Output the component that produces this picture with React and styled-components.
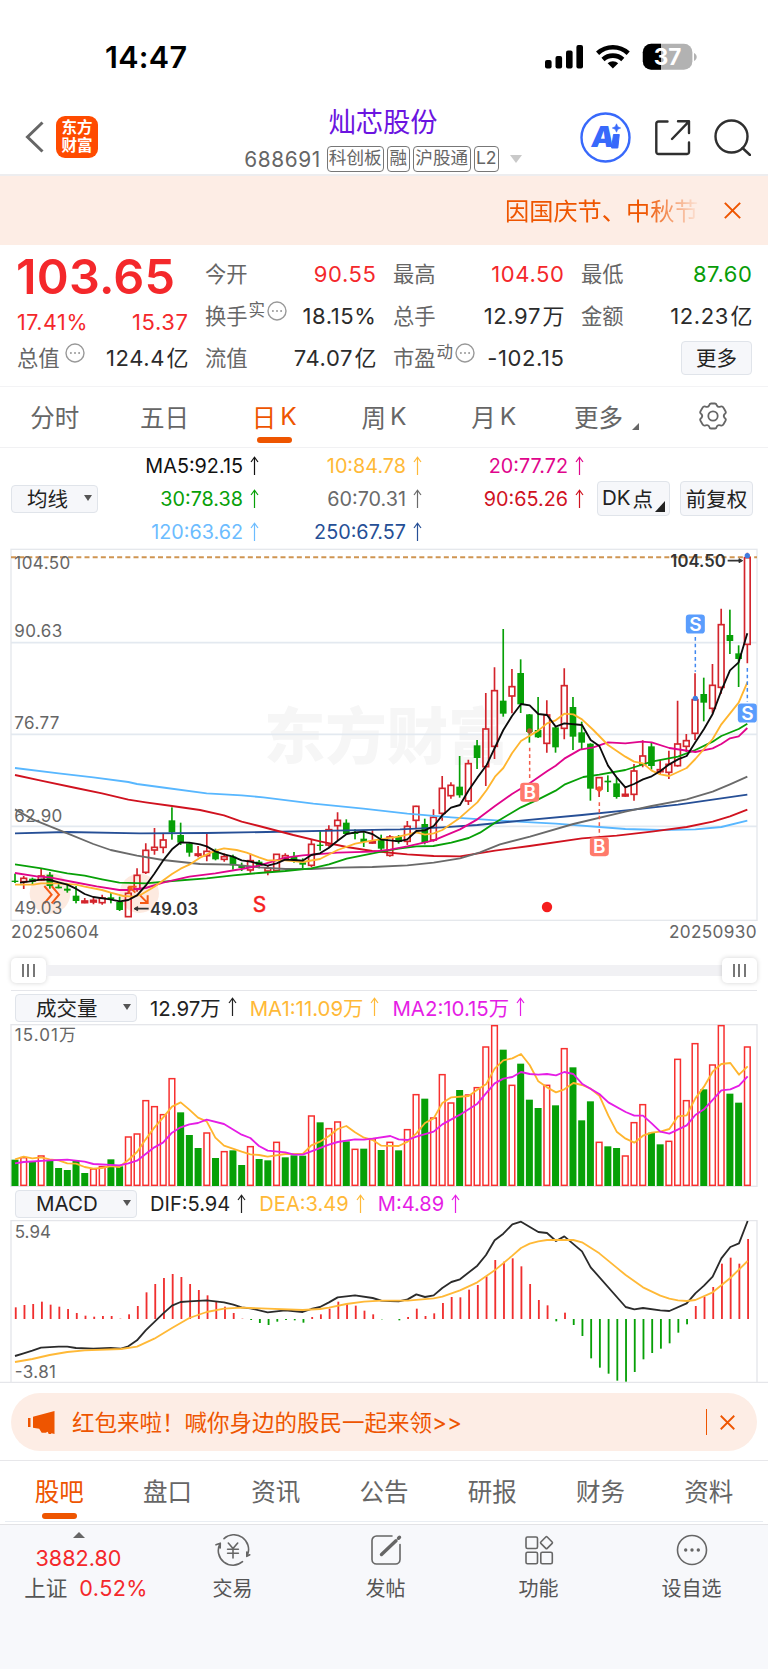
import React from "react";
import styled, { createGlobalStyle } from "styled-components";

const RED = "#f4282b";
const GREEN = "#089c08";
const ORANGE = "#ee5500";
const STEP = 26.155;

const xAt = (i) => 45 + STEP * i;

// color, high, body top, body bottom, low
const candles = `g 1001 1022 1026 1029|r 1008 1015 1025 1047|g 1013 1016 1026 1032|r 985 1008 1020 1023|g 996 1004 1038 1046|g 1033 1040 1045 1045|g 1035 1046 1052 1058|g 1038 1067 1083 1090|r 1074 1083 1088 1090|r 1070 1081 1086 1093|r 1064 1074 1088 1094|g 1058 1072 1077 1090|g 1070 1086 1110 1113|r 1040 1060 1130 1130|r 985 1006 1048 1055|r 910 931 997 1002|r 864 922 930 944|r 882 900 922 940|g 802 841 877 899|g 848 885 908 915|g 907 910 938 950|r 918 942 946 952|r 882 934 947 964|g 926 934 958 961|r 940 950 958 965|g 944 950 976 989|g 968 978 984 993|r 941 962 990 998|g 960 965 978 985|r 978 985 993 1006|r 943 943 992 992|r 940 947 956 962|g 936 950 962 968|g 955 967 974 984|r 898 913 976 982|g 870 914 918 932|r 856 869 915 920|r 817 841 857 900|g 838 848 882 885|g 868 878 882 898|g 877 896 906 921|r 868 905 909 911|g 884 895 926 932|r 885 891 946 950|g 885 890 906 911|r 843 859 904 915|r 797 799 841 868|g 836 852 908 913|r 808 832 900 905|r 708 745 820 842|r 727 736 767 776|g 648 740 766 773|r 659 671 783 795|g 600 616 654 687|r 459 567 680 738|r 382 452 619 657|g 267 482 521 530|r 387 440 468 520|g 358 399 493 519|g 522 523 576 608|g 471 570 592 594|r 481 525 610 638|g 560 562 622 638|r 385 437 565 598|g 471 501 590 630|g 545 577 608 628|g 610 611 746 782|r 712 713 747 771|g 706 722 727 756|g 712 730 771 776|r 740 763 768 770|r 672 693 763 782|r 601 648 673 682|g 609 619 678 689|r 660 689 695 703|r 632 673 697 717|r 482 612 677 680|r 582 602 619 636|r 400 479 580 600|g 413 462 488 544|r 372 436 505 520|r 206 254 442 461|g 209 285 303 342|g 316 340 357 441|r 38 53 313 370`
  .split("|")
  .map((row) => {
    const [color, ...rest] = row.split(" ");
    return [color, ...rest.map(Number)];
  });

const maLines = [
  {
    color: "#58b7ff",
    points:
      "45,684 176,700 280,712 385,726 411,732 500,744 620,760 725,766 790,772 940,791 1090,806 1222,821 1354,832 1500,842 1667,851 1876,867 1980,870 2086,868 2164,861 2242,842",
  },
  {
    color: "#264f96",
    points:
      "45,880 200,876 420,880 620,879 800,876 1040,871 1200,868 1327,862 1432,855 1563,842 1746,825 1900,809 2034,794 2138,779 2242,764",
  },
  {
    color: "#d0121f",
    points:
      "45,705 123,722 228,744 306,760 385,779 437,787 516,798 600,810 672,826 725,845 777,858 880,885 960,904 1040,921 1117,933 1222,943 1301,948 1380,949 1485,932 1589,918 1746,895 1850,887 1955,875 2060,861 2138,845 2190,829 2242,809",
  },
  {
    color: "#6a6a6a",
    points:
      "45,808 100,839 202,880 280,912 332,930 411,947 489,960 600,972 700,974 777,982 856,987 934,987 1013,983 1117,981 1222,976 1301,968 1380,955 1440,937 1500,913 1590,890 1720,852 1876,815 1955,798 2060,778 2138,755 2190,733 2242,710",
  },
  {
    color: "#07a007",
    points:
      "45,973 124,985 202,1000 254,1007 306,1018 358,1028 437,1030 516,1023 620,1015 700,1006 777,999 856,993 934,985 987,973 1040,956 1144,935 1196,926 1249,919 1300,918 1354,908 1406,894 1440,878 1485,848 1510,833 1563,802 1615,778 1667,752 1693,734 1750,711 1798,704 1876,690 1955,665 2034,650 2086,630 2138,605 2164,588 2216,567 2242,551",
  },
  {
    color: "#e0058c",
    points:
      "45,999 110,1009 149,1012 220,1026 290,1039 358,1050 385,1050 437,1044 489,1028 568,1010 646,1000 725,987 777,977 856,953 908,946 1013,938 1117,935 1170,929 1222,919 1301,901 1380,868 1432,838 1485,798 1536,762 1589,730 1641,694 1667,677 1693,656 1740,629 1780,622 1824,607 1876,610 1925,605 1955,607 2008,624 2086,636 2138,625 2164,612 2190,595 2216,589 2242,564",
  },
  {
    color: "#ffb52e",
    points:
      "45,1034 100,1034 123,1030 176,1030 228,1034 254,1040 306,1050 332,1058 370,1068 400,1070 425,1063 463,1040 516,1002 542,986 568,974 600,953 646,932 672,925 710,930 740,938 777,952 803,961 856,961 908,966 960,957 1013,930 1066,911 1120,901 1196,890 1249,877 1275,884 1301,880 1327,870 1380,833 1432,787 1460,750 1485,710 1510,684 1536,640 1563,603 1589,587 1615,572 1641,550 1667,541 1693,521 1720,523 1746,538 1780,570 1824,615 1876,650 1902,665 1929,670 1955,692 1981,703 2008,708 2060,684 2086,657 2112,627 2138,597 2164,553 2216,488 2242,427",
  },
  {
    color: "#0c0c0c",
    points:
      "60,1028 90,1024 125,1018 150,1020 176,1027 202,1034 228,1046 254,1062 280,1071 330,1078 360,1084 385,1080 411,1066 437,1037 463,1001 489,962 516,928 542,907 568,908 600,913 620,919 646,934 672,943 699,950 725,961 751,965 777,971 803,977 830,970 855,959 882,960 908,962 934,945 960,940 987,923 1013,902 1040,882 1066,877 1092,875 1117,882 1144,899 1170,901 1196,904 1222,898 1249,873 1275,871 1301,858 1327,826 1353,803 1380,795 1406,751 1432,713 1460,675 1485,622 1510,570 1536,528 1563,492 1589,496 1615,522 1641,525 1667,560 1693,550 1746,555 1772,600 1798,618 1824,677 1850,712 1876,742 1902,732 1929,718 1955,709 1981,693 2008,673 2034,658 2060,648 2086,607 2112,567 2138,522 2164,452 2190,391 2216,367 2242,280",
  },
];

const volumes =
  "g690 r682 g696 r677 g692 g715 g721 g693 g730 r716 r709 g689 g710 r620 r611 r511 r529 r553 r445 g548 g616 g655 r608 g685 r664 g662 g706 r649 g688 g692 r636 g683 g677 g678 r557 g578 r595 r575 g635 r657 g657 r625 g661 r636 g662 r598 r493 g507 r563 r433 r518 g481 r494 r472 r350 r286 g360 r465 g402 g510 g535 r465 g527 r355 g413 g572 g515 r636 g650 g655 r677 r577 r523 g609 g644 r633 r387 r511 r340 g479 r404 r286 g492 g519 r350"
    .split(" ")
    .map((v) => [v[0], Number(v.slice(1))]);

const volumeMa1 =
  "45,688 71,680 97,685 123,682 149,688 176,691 202,700 228,701 254,711 280,716 306,714 332,708 358,711 385,690 411,666 437,628 463,593 489,563 516,530 542,517 568,539 594,563 620,574 646,623 672,647 725,665 751,673 777,675 803,680 856,672 908,672 934,646 960,635 987,618 1013,597 1039,588 1065,607 1092,623 1118,630 1144,647 1196,648 1223,635 1249,610 1275,579 1301,565 1327,519 1354,502 1406,498 1432,479 1458,463 1484,416 1510,391 1537,385 1563,372 1589,405 1615,454 1641,472 1668,487 1693,478 1720,459 1746,465 1772,476 1798,497 1825,557 1850,605 1877,626 1903,638 1929,617 1955,608 1981,605 2008,597 2034,559 2060,556 2086,505 2112,470 2138,425 2164,402 2191,399 2217,434 2243,409";
const volumeMa2 =
  "45,700 71,696 149,691 202,689 254,695 280,702 358,706 385,700 411,692 463,652 489,638 516,608 542,592 568,583 594,579 620,569 672,582 725,614 751,624 777,648 803,662 856,667 882,674 908,674 934,664 987,644 1013,636 1065,628 1092,629 1118,626 1171,618 1196,628 1223,630 1249,620 1301,605 1327,583 1380,554 1432,521 1458,490 1484,460 1510,446 1537,441 1563,426 1589,432 1615,434 1641,432 1668,436 1693,426 1720,432 1746,461 1798,492 1825,517 1877,546 1903,557 1929,557 1955,580 1981,605 2008,611 2060,586 2086,555 2112,538 2164,481 2191,478 2217,467 2243,439";

const macdBars = [
  352, 345, 342, 335, 344, 350, 357, 369, 377, 380, 378, 378, 386, 373, 348,
  307, 282, 264, 252, 261, 282, 300, 316, 336, 350, 369, 386, 390, 399, 405,
  395, 390, 391, 398, 381, 373, 356, 335, 341, 347, 362, 373, 388, 387, 391,
  381, 356, 378, 370, 339, 321, 322, 299, 285, 259, 210, 215, 205, 229, 282,
  330, 346, 394, 368, 405, 438, 505, 533, 551, 572, 575, 546, 508, 489, 476,
  460, 428, 403, 348, 320, 291, 221, 203, 221, 147,
];
const dif =
  "45,498 71,490 97,482 123,473 176,470 202,470 228,474 280,476 332,474 363,476 385,469 411,451 437,421 489,371 516,347 542,336 568,334 620,331 672,337 700,344 725,352 751,355 803,367 856,361 908,366 934,357 960,351 987,337 1013,322 1065,316 1118,324 1144,332 1170,333 1196,334 1223,328 1249,313 1275,321 1301,316 1327,294 1354,276 1380,268 1432,227 1458,195 1484,151 1510,131 1537,103 1563,95 1615,126 1641,129 1668,153 1693,139 1746,184 1772,232 1877,351 1903,358 1929,354 1981,361 2008,363 2060,340 2086,310 2112,287 2138,260 2164,205 2191,171 2217,160 2243,93";
const dea =
  "45,516 97,507 149,495 202,486 254,481 363,477 411,470 463,446 516,414 568,384 620,366 672,356 725,353 803,356 908,360 960,357 987,353 1039,342 1092,335 1144,332 1223,332 1301,325 1327,320 1380,301 1432,277 1484,241 1537,197 1563,174 1589,161 1615,154 1641,150 1720,150 1746,157 1798,190 1850,233 1877,255 1929,292 1981,317 2008,326 2034,331 2060,333 2086,330 2138,307 2191,264 2243,213";

const legend = [
  ["MA5:92.15", "#111"],
  ["10:84.78", "#ffb937"],
  ["20:77.72", "#e0058c"],
  ["30:78.38", "#07a007"],
  ["60:70.31", "#6a6a6a"],
  ["90:65.26", "#d0121f"],
  ["120:63.62", "#6cbcff"],
  ["250:67.57", "#264f96"],
];

const More = () => (
  <MoreSvg viewBox="0 0 20 20">
    <circle cx="10" cy="10" r="9" />
    <path d="M5.9 10h.01M10 10h.01M14.1 10h.01" />
  </MoreSvg>
);

const Arrow = () => (
  <ArrowSvg viewBox="0 0 9 20">
    <path d="M4.500 19V1.500M1 6 4.500 1.200 8 6" />
  </ArrowSvg>
);

const Amount = ({ unit, children }) => (
  <Value>
    {children}
    <Unit>{unit}</Unit>
  </Value>
);

const StatusIcons = () => (
  <svg width="154" height="30" viewBox="0 0 154 30">
    <g>
      <rect x="0" y="18" width="6.6" height="8.6" rx="2" />
      <rect x="10.5" y="14" width="6.6" height="12.6" rx="2" />
      <rect x="21" y="8.5" width="6.6" height="18.1" rx="2" />
      <rect x="31.4" y="3" width="6.6" height="23.6" rx="2" />
    </g>
    <g fill="none" stroke="#000" strokeWidth="4.6">
      <path d="M52.6 11.3a22.5 22.5 0 0 1 30.6 0" />
      <path d="M58 17.5a14.6 14.6 0 0 1 19.8 0" />
    </g>
    <path d="M67.9 26.6 62.6 21.3a7.8 7.8 0 0 1 10.6 0Z" />
    <clipPath id="batt">
      <rect x="97.8" y="1.8" width="49.6" height="26" rx="8.5" />
    </clipPath>
    <g clipPath="url(#batt)">
      <rect x="97" y="1" width="52" height="28" fill="#b2b2b2" />
      <rect x="97" y="1" width="19" height="28" />
    </g>
    <path d="M149 11v8c3.6-1.5 3.6-6.500 0-8Z" fill="#b2b2b2" />
    <text x="122.600" y="23.300" textAnchor="middle" fill="#fff" fontSize="22.500" fontWeight="700">
      37
    </text>
  </svg>
);

const KLine = () => (
  <Plot viewBox="0 24 2304 1128" height="376">
    <Watermark x="792" y="656">东方财富</Watermark>
    <g stroke="#e3e9f0" strokeWidth="5" fill="none">
      <path d="M33 308H2271M33 583H2271M33 859H2271" />
      <rect x="33" y="28" width="2238" height="1113" stroke="#e5e8ec" strokeWidth="4" />
    </g>
    <path d="M33 52H2271" stroke="#cf9552" strokeWidth="6" strokeDasharray="15 9.500" />
    <g fill="#fde3d6" opacity="0.75">
      <circle cx="150" cy="1060" r="61" />
      <circle cx="418" cy="1060" r="59" />
    </g>
    {candles.map(([color, high, top, bottom, low], i) => {
      const x = xAt(i);
      if (color === "g") {
        return (
          <g key={i} fill="#07a007">
            <rect x={x - 2.5} y={high} width="5" height={low - high} />
            <rect x={x - 10} y={top} width="20" height={Math.max(bottom - top, 4)} />
          </g>
        );
      }
      return (
        <g key={i} fill="none" stroke="#d3242c" strokeWidth="5">
          <path d={`M${x} ${high}V${top}M${x} ${bottom}V${low}`} />
          <rect x={x - 8.5} y={top} width="17" height={bottom - top} />
        </g>
      );
    })}
    {maLines.map(({ color, points }) => (
      <Line key={color} points={points} stroke={color} />
    ))}
    <g fill="none" stroke="#f55a14" strokeWidth="6">
      <path d="M133 1038l22 26-22 26M155 1038l22 26-22 26" />
      <path d="M388 1062v-22h22M390 1042l16 16M443 1066v23h-23M441 1087l-20-20" />
    </g>
    <AxisText x="43" y="87" textLength="168">104.50</AxisText>
    <AxisText x="43" y="291" textLength="144">90.63</AxisText>
    <AxisText x="43" y="567" textLength="135">76.77</AxisText>
    <AxisText x="43" y="845" textLength="144">62.90</AxisText>
    <AxisText x="43" y="1121" textLength="144">49.03</AxisText>
    <MarkText x="450" y="1126" textLength="144">49.03</MarkText>
    <MarkText x="2011" y="80" textLength="166">104.50</MarkText>
    <g stroke="#333" strokeWidth="5" fill="#333">
      <path d="M408 1106H446M2183 62H2222" />
      <path d="M402 1106l11-6v12ZM2228 62l-11-6v12Z" strokeWidth="3" />
    </g>
    <text x="758" y="1116" fontSize="63" fill="#f51d1d" stroke="#f51d1d" strokeWidth="1.500">S</text>
    <circle cx="1641" cy="1101" r="15.500" fill="#f51d1d" />
    <g fill="none" strokeWidth="4.500" strokeDasharray="11 9">
      <path d="M1589 623V722M1798 787V888" stroke="#f45b49" />
      <path d="M2086 291V395M2242 384V485" stroke="#4088f0" />
    </g>
    <circle cx="1589" cy="573" r="8" fill="#b8522f" />
    <circle cx="1798" cy="747" r="8" fill="#f9512f" />
    <circle cx="2086" cy="475" r="8" fill="#3f7ce0" />
    <circle cx="2242" cy="47" r="8" fill="#3f7ce0" />
    {[
      ["B", 1589, 757],
      ["B", 1798, 920],
      ["S", 2086, 252],
      ["S", 2242, 519],
    ].map(([label, x, y]) => (
      <g key={`${label}${x}`}>
        <rect x={x - 28.5} y={y - 28.5} width="57" height="57" rx="10" fill={label === "B" ? "#ff7a6b" : "#5a9dfd"} />
        <text x={x} y={y + 20} textAnchor="middle" fontSize="57" fontWeight="600" fill="#fff">
          {label}
        </text>
      </g>
    ))}
  </Plot>
);

const Volume = () => (
  <Plot viewBox="0 282 2304 492" height="164">
    <rect x="33" y="284" width="2238" height="485" fill="none" stroke="#e5e6ea" strokeWidth="4" />
    {volumes.map(([color, top], i) =>
      color === "g" ? (
        <rect key={i} x={xAt(i) - 10.5} y={top - 1} width="21" height={769 - top} fill="#07a007" />
      ) : (
        <rect key={i} x={xAt(i) - 8.5} y={top + 1} width="17" height={765 - top} fill="#fff" stroke="#f7302f" strokeWidth="4.500" />
      )
    )}
    <Line points={volumeMa1} stroke="#ffb52e" />
    <Line points={volumeMa2} stroke="#e51de5" />
    <AxisText x="44" y="334" textLength="130">15.01</AxisText>
    <AxisText x="177" y="334">万</AxisText>
  </Plot>
);

const Macd = () => (
  <Plot viewBox="0 90 2304 489" height="163">
    <path d="M33 577V92H2271V577M0 577H2304" fill="none" stroke="#e5e6ea" strokeWidth="4" />
    {macdBars.map((y, i) => (
      <rect
        key={i}
        x={xAt(i) - 0.5}
        y={Math.min(y, 387)}
        width="5.5"
        height={Math.abs(387 - y)}
        fill={y < 387 ? "#f02f2f" : "#07a007"}
      />
    ))}
    <Line points={dif} stroke="#2b2b2b" />
    <Line points={dea} stroke="#ffb937" />
    <AxisText x="44" y="143" textLength="109">5.94</AxisText>
    <AxisText x="44" y="565" textLength="124">-3.81</AxisText>
  </Plot>
);

const App = () => {
  return (
    <Page>
      <GlobalStyle />
      <StatusBar>
        <Time>14:47</Time>
        <StatusIcons />
      </StatusBar>

      <Header>
        <HeaderSide>
          <svg width="20" height="32" viewBox="0 0 20 32" fill="none" stroke="#666" strokeWidth="3">
            <path d="M17.500 1.500 2.500 16l15 14.500" />
          </svg>
          <Logo>
            <span>东方</span>
            <span>财富</span>
          </Logo>
        </HeaderSide>
        <HeaderTitle>
          <StockName>灿芯股份</StockName>
          <StockMeta>
            <Code>688691</Code>
            <Tag $w={57}>科创板</Tag>
            <Tag $w={23}>融</Tag>
            <Tag $w={58}>沪股通</Tag>
            <Tag $w={25}>L2</Tag>
            <Triangle $size={6} $color="#c9c9c9" />
          </StockMeta>
        </HeaderTitle>
        <HeaderSide $end>
          <svg width="51" height="51" viewBox="0 0 51 51">
            <circle cx="25.500" cy="25.500" r="24" fill="none" stroke="#3869fb" strokeWidth="2.400" />
            <AiText x="10" y="35" transform="translate(4.500 0) skewX(-7)">A</AiText>
            <path d="M33.500 22.500h5.800l-1.500 13.500h-6.200Z" fill="#3869fb" stroke="#3869fb" strokeLinejoin="round" />
            <path d="M36.500 11.800l1.300 2.900 2.900 1.300-2.900 1.300-1.300 2.900-1.300-2.900-2.900-1.300 2.900-1.300Z" fill="#3869fb" stroke="#3869fb" strokeWidth=".6" />
          </svg>
          <svg width="37" height="37" viewBox="0 0 37 37" fill="none" stroke="#2f2f2f" strokeWidth="2.400" strokeLinecap="round" strokeLinejoin="round">
            <path d="M13.500 2.500H4.500A2.200 2.200 0 0 0 2.300 4.700V33A2.200 2.200 0 0 0 4.500 35H33A2.200 2.200 0 0 0 35 33V23.500M24 2.300H35V14M35 2.300 18 20" />
          </svg>
          <svg width="37" height="37" viewBox="0 0 37 37" fill="none" stroke="#2f2f2f" strokeWidth="2.400" strokeLinecap="round">
            <circle cx="17.500" cy="17.500" r="16" />
            <path d="M28.500 29 36 36" />
          </svg>
        </HeaderSide>
      </Header>

      <Notice>
        <NoticeText>因国庆节、中秋节</NoticeText>
        <Cross size={17} />
      </Notice>

      <Quote>
        <PriceColumn>
          <Price>103.65</Price>
          <QuoteRow $h={40} $color={RED}>
            <Value $size={21.4}>17.41%</Value>
            <Value>15.37</Value>
          </QuoteRow>
          <QuoteRow $h={32}>
            <Label>
              总值
              <More />
            </Label>
            <Amount unit="亿">124.4</Amount>
          </QuoteRow>
        </PriceColumn>
        <QuoteGrid>
          <QuoteRow $color={RED}><Label>今开</Label><Value>90.55</Value></QuoteRow>
          <QuoteRow $color={RED}><Label>最高</Label><Value>104.50</Value></QuoteRow>
          <QuoteRow $color={GREEN}><Label>最低</Label><Value>87.60</Value></QuoteRow>
          <QuoteRow>
            <Label>换手<Sup>实</Sup><More /></Label>
            <Value>18.15%</Value>
          </QuoteRow>
          <QuoteRow><Label>总手</Label><Amount unit="万">12.97</Amount></QuoteRow>
          <QuoteRow><Label>金额</Label><Amount unit="亿">12.23</Amount></QuoteRow>
          <QuoteRow><Label>流值</Label><Amount unit="亿">74.07</Amount></QuoteRow>
          <QuoteRow>
            <Label>市盈<Sup>动</Sup><More /></Label>
            <Value>-102.15</Value>
          </QuoteRow>
          <QuoteRow $end><Button $w={71} $h={34}>更多</Button></QuoteRow>
        </QuoteGrid>
      </Quote>

      <PeriodTabs>
        <PeriodTab>分时</PeriodTab>
        <PeriodTab>五日</PeriodTab>
        <PeriodTab $active>日<Spaced>K</Spaced></PeriodTab>
        <PeriodTab>周<Spaced>K</Spaced></PeriodTab>
        <PeriodTab>月<Spaced>K</Spaced></PeriodTab>
        <PeriodTab $shift={10}>
          更多
          <Corner $size={7} />
        </PeriodTab>
        <PeriodTab>
          <svg width="30" height="28" viewBox="0 0 30 28" fill="none" stroke="#666" strokeWidth="1.800" strokeLinejoin="round">
            <path d="M11 3.800Q11.600 1.500 13 1.500H17Q18.400 1.500 19 3.800Q20 5.500 22.500 4.600Q24.500 4 25.500 5.800L27.500 9.200Q28.500 11 26.500 12.200Q25 14 26.500 15.800Q28.500 17 27.500 18.800L25.500 22.200Q24.500 24 22.500 23.400Q20 22.500 19 24.200Q18.400 26.500 17 26.500H13Q11.600 26.500 11 24.200Q10 22.500 7.500 23.400Q5.500 24 4.500 22.200L2.500 18.800Q1.500 17 3.500 15.800Q5 14 3.500 12.200Q1.500 11 2.500 9.200L4.500 5.800Q5.500 4 7.500 4.600Q10 5.500 11 3.800Z" />
            <circle cx="15" cy="14" r="4.700" />
          </svg>
        </PeriodTab>
      </PeriodTabs>

      <Legend>
        <Button $w={87} $h={28} $drop>
          均线
          <Triangle $size={4.5} $color="#555" />
        </Button>
        <LegendGrid>
          {legend.map(([text, color]) => (
            <LegendItem key={text} $color={color}>
              {text}
              <Arrow />
            </LegendItem>
          ))}
        </LegendGrid>
        <LegendButtons>
          <Button $w={73} $h={35} $shift={12}>
            DK<Spaced>点</Spaced>
            <Corner $size={10} $dark />
          </Button>
          <Button $w={73} $h={35}>前复权</Button>
        </LegendButtons>
      </Legend>

      <KLine />
      <Dates>
        <span>20250604</span>
        <span>20250930</span>
      </Dates>
      <Slider>
        <Handle />
        <Track />
        <Handle />
      </Slider>

      <IndicatorBar $h={33}>
        <Button $w={122} $h={28} $drop>
          成交量
          <Triangle $size={4.5} $color="#555" />
        </Button>
        <Indicator $size={20.4} $color="#222">12.97万<Arrow /></Indicator>
        <Indicator $size={20.4} $color="#ffb937">MA1:11.09万<Arrow /></Indicator>
        <Indicator $size={20.4} $color="#e51de5">MA2:10.15万<Arrow /></Indicator>
      </IndicatorBar>
      <Volume />
      <IndicatorBar $h={32}>
        <Button $w={122} $h={28} $drop>
          MACD
          <Triangle $size={4.5} $color="#555" />
        </Button>
        <Indicator $flat $color="#222">DIF:5.94<Arrow /></Indicator>
        <Indicator $flat $color="#ffb937">DEA:3.49<Arrow /></Indicator>
        <Indicator $flat $color="#e51de5">M:4.89<Arrow /></Indicator>
      </IndicatorBar>
      <Macd />

      <Promo>
        <svg width="27" height="23" viewBox="0 0 27 23" fill={ORANGE}>
          <path d="M0 7h2.500v9H0ZM5 5.800 26.500 0v23l-3-.8-.6.8h-2.200l-1-2.200-2 .9h-4l-2.500-4L5 16.800Z" />
        </svg>
        <PromoText>红包来啦！喊你身边的股民一起来领&gt;&gt;</PromoText>
        <PromoDivider />
        <Cross size={15} />
      </Promo>

      <SectionTabs>
        {["股吧", "盘口", "资讯", "公告", "研报", "财务", "资料"].map((name, i) => (
          <SectionTab key={name} $active={i === 0}>{name}</SectionTab>
        ))}
      </SectionTabs>

      <BottomBar>
        <IndexBox>
          <UpTriangle />
          <IndexValue>3882.80</IndexValue>
          <IndexName>上证 <b>0.52%</b></IndexName>
        </IndexBox>
        <BottomItem>
          <BottomIcon viewBox="0 0 36 32">
            <path d="M9 4.600A14.700 14.700 0 0 1 32.500 21M27.500 27.700A14.700 14.700 0 0 1 4.800 10M1 10.800 5.300 9.200 5.200 14M31.800 18v4.400l3-1.600" />
            <path d="m13.300 9 4.700 5.600L22.700 9M18 14.600V24M12.600 15.300h10.800M12.600 19.200h10.800" />
          </BottomIcon>
          交易
        </BottomItem>
        <BottomItem>
          <BottomIcon viewBox="0 0 36 32">
            <path d="M24 2H8.500A4.500 4.500 0 0 0 4 6.500v19A4.500 4.500 0 0 0 8.500 30h19a4.500 4.500 0 0 0 4.500-4.500V10.500" />
            <path d="M13.500 20.500 28 6.800M30.500 4.200l1-1" strokeWidth="3.400" />
          </BottomIcon>
          发帖
        </BottomItem>
        <BottomItem>
          <BottomIcon viewBox="0 0 36 32">
            <rect x="5" y="3" width="11.500" height="11.500" rx="1.500" />
            <rect x="5" y="18.200" width="11.500" height="11.500" rx="1.500" />
            <rect x="19.800" y="18.200" width="11.500" height="11.500" rx="1.500" />
            <rect x="21" y="4.200" width="9" height="9" rx="1" transform="rotate(45 25.500 8.700)" />
          </BottomIcon>
          功能
        </BottomItem>
        <BottomItem>
          <BottomIcon viewBox="0 0 36 32">
            <circle cx="18" cy="16" r="14.500" />
            <path d="M11.700 16h.01M18 16h.01M24.300 16h.01" strokeWidth="3.400" />
          </BottomIcon>
          设自选
        </BottomItem>
      </BottomBar>
    </Page>
  );
};

const Cross = ({ size }) => (
  <svg width={size} height={size} viewBox="0 0 16 16" fill="none" stroke={ORANGE} strokeWidth="1.900">
    <path d="M.8.8l14.400 14.400M15.200.8.8 15.200" />
  </svg>
);

const GlobalStyle = createGlobalStyle`
  body {
    margin: 0;
    background: #fff;
    font-family: Inter, "Noto Sans CJK SC", sans-serif;
    color: #2b2b2b;
  }
  * {
    box-sizing: border-box;
  }
  svg {
    flex-shrink: 0;
  }
`;

const Page = styled.div`
  width: 768px;
  height: 1669px;
  display: flex;
  flex-direction: column;
  overflow: hidden;
  white-space: nowrap;

  > * {
    flex-shrink: 0;
  }
`;

const StatusBar = styled.div`
  height: 100px;
  display: flex;
  align-items: center;
  justify-content: space-between;
  padding: 13px 69px 0 105px;
`;

const Time = styled.div`
  font-size: 30.5px;
  font-weight: 600;
  letter-spacing: 0.3px;
  color: #000;
`;

const Header = styled.header`
  height: 76px;
  display: grid;
  grid-template-columns: 200px 1fr 200px;
  border-bottom: 2px solid #ededef;
`;

const HeaderSide = styled.div`
  display: flex;
  align-items: center;
  gap: ${({ $end }) => ($end ? 23 : 11)}px;
  padding: ${({ $end }) => ($end ? "0 17px 3px 12px" : "0 0 3px 25px")};
`;

const Logo = styled.div`
  width: 42px;
  height: 42px;
  border-radius: 9px;
  background: #ff4b00;
  color: #fff;
  display: grid;
  place-content: center;
  padding-bottom: 1px;
  font-size: 15.5px;
  line-height: 18px;
  font-weight: 600;
`;

const HeaderTitle = styled.div`
  display: flex;
  flex-direction: column;
  align-items: center;
  padding: 5px 2px 0 0;
`;

const StockName = styled.h1`
  margin: 0;
  font-size: 27.3px;
  font-weight: 400;
  line-height: 36px;
  color: #6b14e0;
`;

const StockMeta = styled.div`
  display: flex;
  align-items: center;
  gap: 3px;
  height: 36px;
  color: #666;
`;

const Code = styled.span`
  font-size: 20.8px;
  letter-spacing: 0.6px;
  margin-right: 3px;
`;

const Tag = styled.span`
  width: ${({ $w }) => $w}px;
  height: 26px;
  border: 1.5px solid #777;
  border-radius: 4px;
  font-size: 17.6px;
  line-height: 22px;
  display: flex;
  justify-content: center;
`;

const Triangle = styled.i`
  border: ${({ $size }) => $size}px solid transparent;
  border-top: ${({ $size }) => $size * 1.4}px solid ${({ $color }) => $color};
  border-bottom: 0;
  margin-left: 8px;
`;

const AiText = styled.text`
  font-size: 29px;
  font-weight: 900;
  fill: #3869fb;
`;

const Notice = styled.div`
  height: 69px;
  background: #fdede5;
  display: flex;
  align-items: center;
  justify-content: flex-end;
  gap: 25px;
  padding-right: 27px;
`;

const NoticeText = styled.div`
  width: 194px;
  padding-bottom: 2px;
  color: ${ORANGE};
  font-size: 24.2px;
  mask-image: linear-gradient(90deg, #000 72%, transparent 101%);
`;

const Quote = styled.section`
  height: 142px;
  padding: 8px 16px 0 17px;
  display: grid;
  grid-template-columns: 171px 1fr;
  gap: 17px;
  border-bottom: 1px solid #f3f3f5;
`;

const PriceColumn = styled.div``;

const Price = styled.div`
  height: 49px;
  line-height: 47px;
  margin-left: -1px;
  font-size: 48.5px;
  font-weight: 600;
  letter-spacing: 0.2px;
  color: ${RED};
`;

const QuoteGrid = styled.div`
  display: grid;
  grid-template-columns: repeat(3, 171px);
  grid-auto-rows: 42px;
  column-gap: 17px;
`;

const QuoteRow = styled.div`
  height: ${({ $h }) => $h || 42}px;
  display: flex;
  align-items: center;
  justify-content: ${({ $end }) => ($end ? "flex-end" : "space-between")};
  color: ${({ $color }) => $color || "#2b2b2b"};
`;

const Label = styled.span`
  display: flex;
  align-items: center;
  padding-bottom: 3px;
  font-size: 21.3px;
  color: #666;
`;

const Sup = styled.span`
  font-size: 16.5px;
  margin: -12px -2px 0 1px;
`;

const Value = styled.span`
  font-size: ${({ $size }) => $size || 22}px;
  letter-spacing: 0.6px;
  line-height: 26px;
  margin-right: -0.5px;
`;

const Unit = styled.span`
  margin-left: 1.5px;
  letter-spacing: 0;
`;

const Spaced = styled.span`
  margin-left: 4px;
`;

const MoreSvg = styled.svg`
  width: 20px;
  height: 20px;
  margin: -8px 0 0 5px;
  fill: none;
  stroke: #999;
  stroke-width: 1.4;

  path {
    stroke-width: 2;
    stroke-linecap: round;
  }

  ${Sup} + & {
    margin-left: 4px;
  }
`;

const Button = styled.button`
  width: ${({ $w }) => $w}px;
  height: ${({ $h }) => $h}px;
  flex-shrink: 0;
  display: flex;
  align-items: center;
  justify-content: ${({ $drop }) => ($drop ? "space-between" : "center")};
  padding: ${({ $drop, $w, $shift = 0 }) =>
    $drop ? `0 5px 2px ${$w > 100 ? 20 : 15}px` : `0 ${$shift}px 2px 0`};
  position: relative;
  border: 1.5px solid #e0e4ea;
  border-radius: 4px;
  background: #f6f7fa;
  color: #222;
  font: 20.5px Inter, "Noto Sans CJK SC", sans-serif;

  > ${Spaced} {
    margin-left: 2px;
  }
`;

const Corner = styled.i`
  position: absolute;
  right: ${({ $dark }) => ($dark ? 4 : 19)}px;
  bottom: ${({ $dark }) => ($dark ? 3 : 17)}px;
  border-left: ${({ $size }) => $size}px solid transparent;
  border-bottom: ${({ $size }) => $size * 1.1}px solid ${({ $dark }) => ($dark ? "#222" : "#666")};
`;

const PeriodTabs = styled.nav`
  height: 61px;
  display: grid;
  grid-template-columns: repeat(7, 1fr);
  border-bottom: 1px solid #f1f1f3;
`;

const PeriodTab = styled.div`
  position: relative;
  display: flex;
  align-items: center;
  justify-content: center;
  font-size: 24.5px;
  color: ${({ $active }) => ($active ? ORANGE : "#666")};
  padding: 0 ${({ $shift = 0 }) => $shift}px 2px 0;

  &::after {
    content: "";
    display: ${({ $active }) => ($active ? "block" : "none")};
    position: absolute;
    bottom: 4px;
    width: 35px;
    height: 6px;
    border-radius: 3px;
    background: ${ORANGE};
  }
`;

const Legend = styled.section`
  height: 100px;
  display: flex;
  align-items: center;
  padding: 1px 15px 0 11px;
`;

const LegendGrid = styled.div`
  width: 486px;
  display: grid;
  grid-template-columns: 161px 163px 162px;
  grid-auto-rows: 33px;
`;

const LegendItem = styled.div`
  display: flex;
  align-items: center;
  justify-content: flex-end;
  gap: 7px;
  font-size: 19.8px;
  color: ${({ $color }) => $color};
`;

const LegendButtons = styled.div`
  display: flex;
  gap: 10px;
  margin-left: auto;
`;

const ArrowSvg = styled.svg`
  width: 9px;
  height: 20px;
  fill: none;
  stroke: currentColor;
  stroke-width: 1.2;
`;

const Plot = styled.svg`
  display: block;
  width: 768px;
`;

const Line = styled.polyline`
  fill: none;
  stroke-width: 5.5;
  stroke-linejoin: round;
`;

const Watermark = styled.text`
  font: 900 184px "Noto Sans CJK SC", sans-serif;
  fill: #f6f6f6;
`;

const AxisText = styled.text`
  font-size: 51px;
  fill: #666;
`;

const MarkText = styled.text`
  font-size: 50px;
  font-weight: 600;
  fill: #333;
`;

const Dates = styled.div`
  height: 16px;
  line-height: 16px;
  display: flex;
  justify-content: space-between;
  padding: 0 11px;
  font-size: 17.2px;
  letter-spacing: 0.35px;
  color: #666;
`;

const Slider = styled.div`
  height: 51px;
  margin: 0 11px;
  padding-top: 10px;
  display: flex;
  align-items: center;
  border-bottom: 1px solid #e5e6ea;
`;

const Track = styled.div`
  flex: 1;
  height: 11px;
  background: #f1f1f4;
`;

const Handle = styled.div`
  width: 35px;
  height: 25px;
  border-radius: 5px;
  box-shadow: 0 0 5px rgba(0, 0, 0, 0.18);
  display: grid;
  place-items: center;

  &::after {
    content: "";
    width: 13px;
    height: 13px;
    background: repeating-linear-gradient(90deg, #777 0 2px, transparent 2px 5.5px);
  }
`;

const IndicatorBar = styled.div`
  height: ${({ $h }) => $h}px;
  display: flex;
  align-items: center;
  gap: 13px;
  padding: 0 15px;
`;

const Indicator = styled.span`
  display: flex;
  align-items: center;
  gap: 7px;
  height: 28px;
  padding-bottom: ${({ $flat }) => ($flat ? 0 : 2)}px;
  font-size: ${({ $size }) => $size || 20.1}px;
  color: ${({ $color }) => $color};
`;

const Promo = styled.div`
  height: 58px;
  margin: 10px 11px 9px;
  padding: 0 22px 0 17px;
  display: flex;
  align-items: center;
  border-radius: 29px;
  background: #fdede5;
  color: ${ORANGE};
`;

const PromoText = styled.span`
  font-size: 22.5px;
  margin: 0 auto 0 17px;
  padding-bottom: 3px;
`;

const PromoDivider = styled.i`
  width: 1.5px;
  height: 26px;
  margin-right: 13px;
  background: ${ORANGE};
`;

const SectionTabs = styled.nav`
  height: 64px;
  padding: 0 5px 2px;
  display: grid;
  grid-template-columns: repeat(7, 1fr);
  border-top: 1px solid #e7e7ea;
`;

const SectionTab = styled.div`
  display: flex;
  align-items: center;
  justify-content: center;
  position: relative;
  padding-bottom: 1px;
  border-bottom: 1px solid #e9edf2;
  font-size: 24.5px;
  color: ${({ $active }) => ($active ? ORANGE : "#666")};

  &::after {
    content: "";
    display: ${({ $active }) => ($active ? "block" : "none")};
    position: absolute;
    bottom: 2px;
    width: 35px;
    height: 6px;
    border-radius: 3px;
    background: ${ORANGE};
  }
`;

const BottomBar = styled.footer`
  flex: 1;
  display: grid;
  grid-template-columns: 156px repeat(4, 153px);
  border-top: 1px solid #e3e3e6;
  background: #f7f8fb;
`;

const IndexBox = styled.div`
  display: flex;
  flex-direction: column;
  align-items: center;
  padding: 7px 0 0 16px;
  color: ${RED};
`;

const UpTriangle = styled.i`
  border: 6px solid transparent;
  border-bottom: 6px solid #666;
  border-top: 0;
  margin-right: 15px;
`;

const IndexValue = styled.div`
  font-size: 21.6px;
  line-height: 30px;
  padding-top: 5px;
  margin-right: 15px;
`;

const IndexName = styled.div`
  display: flex;
  gap: 12px;
  font-size: 21.6px;
  line-height: 31px;
  color: #555;

  b {
    font-weight: 400;
    letter-spacing: 0.4px;
    color: ${RED};
  }
`;

const BottomItem = styled.div`
  display: flex;
  flex-direction: column;
  align-items: center;
  gap: 8px;
  padding-top: 9px;
  font-size: 20px;
  line-height: 31px;
  color: #555;
`;

const BottomIcon = styled.svg`
  width: 36px;
  height: 32px;
  fill: none;
  stroke: #666;
  stroke-width: 1.6;
  stroke-linecap: round;
  stroke-linejoin: round;
`;

export default App;
